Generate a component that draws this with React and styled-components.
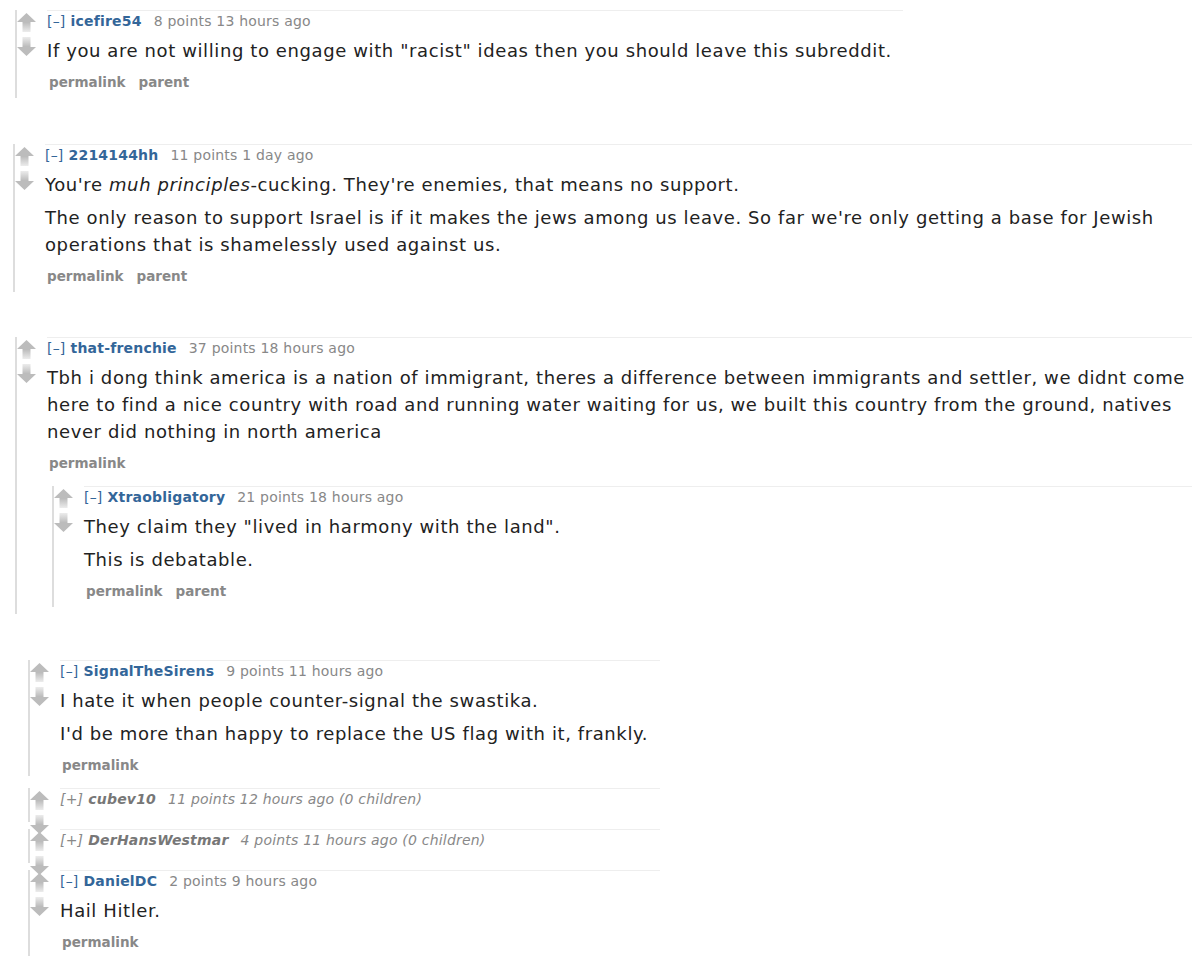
import { useId } from 'react';
import styled, { createGlobalStyle } from 'styled-components';

const GlobalStyle = createGlobalStyle`
  html, body {
    margin: 0;
    padding: 0;
    background: #fff;
    overflow-x: hidden;
  }
  body {
    font-family: "DejaVu Sans", Verdana, sans-serif;
    color: #222;
  }
`;

const Page = styled.div`
  padding-top: 10px;
  padding-bottom: 20px;
  width: 1192px;
  overflow: hidden;
`;

const Comment = styled.div`
  display: flex;
  align-items: flex-start;
  border-left: 2px solid #ddd;
  margin-left: ${p => p.$indent || 0}px;
  margin-top: ${p => p.$gap || 0}px;
  padding-bottom: ${p => p.$bottom ?? 7}px;
  width: ${p => (p.$width ? `${p.$width}px` : 'auto')};
  height: ${p => (p.$collapsed ? '34px' : 'auto')};
  box-sizing: border-box;
`;

const Midcol = styled.div`
  width: 30px;
  flex-shrink: 0;
  display: flex;
  flex-direction: column;
  gap: 5px;
  padding-top: 3px;
`;

const Entry = styled.div`
  flex: 1;
  min-width: 0;
  border-top: 1px solid #eee;
`;

const Tagline = styled.div`
  padding-top: 1px;
  font-size: 14px;
  letter-spacing: 0.2px;
  line-height: 18px;
  color: #888;
  white-space: nowrap;
  font-style: ${p => (p.$collapsed ? 'italic' : 'normal')};
`;

const Expand = styled.span`
  color: ${p => (p.$collapsed ? '#888' : '#369')};
  margin-right: 5px;
`;

const Author = styled.span`
  font-weight: bold;
  color: ${p => (p.$collapsed ? '#777' : '#369')};
  margin-right: 12px;
`;

const Body = styled.div`
  margin-top: 7px;
  font-size: 18px;
  letter-spacing: 0.6px;
  line-height: 27px;
  color: #222;

  p {
    margin: 0 0 6px 0;
  }
  p:last-child {
    margin-bottom: 0;
  }
`;

const Buttons = styled.div`
  display: flex;
  gap: 13px;
  margin-top: 9px;
  padding-left: 2px;
  font-size: 13.5px;
  line-height: 18px;
  font-weight: bold;
  color: #888;
`;

const Children = styled.div`
  padding-top: 14px;
`;

function Arrow({ dir }) {
  const id = useId();
  const up = dir === 'up';
  return (
    <svg width="19" height="19" viewBox="0 0 19 19">
      <defs>
        <linearGradient id={id} x1="0" y1="0" x2="0" y2="1">
          {up ? (
            <>
              <stop offset="0" stopColor="#bcbcbc" />
              <stop offset="0.5" stopColor="#bcbcbc" />
              <stop offset="1" stopColor="#ececec" />
            </>
          ) : (
            <>
              <stop offset="0" stopColor="#ececec" />
              <stop offset="0.5" stopColor="#bcbcbc" />
              <stop offset="1" stopColor="#bcbcbc" />
            </>
          )}
        </linearGradient>
      </defs>
      <polygon
        fill={`url(#${id})`}
        points={
          up
            ? '9.5,0 19,9 13.5,9 13.5,19 5.5,19 5.5,9 0,9'
            : '5.5,0 13.5,0 13.5,10 19,10 9.5,19 0,10 5.5,10'
        }
      />
    </svg>
  );
}

function Votes() {
  return (
    <Midcol>
      <Arrow dir="up" />
      <Arrow dir="down" />
    </Midcol>
  );
}

function Thing({ author, points, time, collapsed, children, buttons, replies, ...rest }) {
  return (
    <Comment $collapsed={collapsed} {...rest}>
      <Votes />
      <Entry>
        <Tagline $collapsed={collapsed}>
          <Expand $collapsed={collapsed}>{collapsed ? '[+]' : '[–]'}</Expand>
          <Author $collapsed={collapsed}>{author}</Author>
          {points} points {time}
          {collapsed && ' (0 children)'}
        </Tagline>
        {!collapsed && (
          <>
            <Body>{children}</Body>
            <Buttons>
              {buttons.map(b => (
                <span key={b}>{b}</span>
              ))}
            </Buttons>
            {replies}
          </>
        )}
      </Entry>
    </Comment>
  );
}

export default function App() {
  return (
    <>
      <GlobalStyle />
      <Page>
        <Thing
          $indent={15}
          $width={888}
          author="icefire54"
          points={8}
          time="13 hours ago"
          buttons={['permalink', 'parent']}
        >
          <p>If you are not willing to engage with "racist" ideas then you should leave this subreddit.</p>
        </Thing>

        <Thing
          $indent={13}
          $gap={46}
          author="2214144hh"
          points={11}
          time="1 day ago"
          buttons={['permalink', 'parent']}
        >
          <p>
            You're <em>muh principles</em>-cucking. They're enemies, that means no support.
          </p>
          <p>
            The only reason to support Israel is if it makes the jews among us leave. So far we're only getting a base for Jewish operations that is shamelessly used against us.
          </p>
        </Thing>

        <Thing
          $indent={15}
          $gap={45}
          author="that-frenchie"
          points={37}
          time="18 hours ago"
          buttons={['permalink']}
          replies={
            <Children>
              <Thing
                $indent={5}
                author="Xtraobligatory"
                points={21}
                time="18 hours ago"
                buttons={['permalink', 'parent']}
              >
                <p>They claim they "lived in harmony with the land".</p>
                <p>This is debatable.</p>
              </Thing>
            </Children>
          }
        >
          <p>
            Tbh i dong think america is a nation of immigrant, theres a difference between immigrants and settler, we didnt come here to find a nice country with road and running water waiting for us, we built this country from the ground, natives never did nothing in north america
          </p>
        </Thing>

        <Thing
          $indent={28}
          $gap={46}
          $width={632}
          $bottom={2}
          author="SignalTheSirens"
          points={9}
          time="11 hours ago"
          buttons={['permalink']}
        >
          <p>I hate it when people counter-signal the swastika.</p>
          <p>I'd be more than happy to replace the US flag with it, frankly.</p>
        </Thing>

        <Thing
          collapsed
          $indent={28}
          $gap={12}
          $width={632}
          $bottom={0}
          author="cubev10"
          points={11}
          time="12 hours ago"
        />
        <Thing
          collapsed
          $indent={28}
          $gap={7}
          $width={632}
          $bottom={0}
          author="DerHansWestmar"
          points={4}
          time="11 hours ago"
        />
        <Thing
          $indent={28}
          $gap={7}
          $width={632}
          author="DanielDC"
          points={2}
          time="9 hours ago"
          buttons={['permalink']}
        >
          <p>Hail Hitler.</p>
        </Thing>
      </Page>
    </>
  );
}
